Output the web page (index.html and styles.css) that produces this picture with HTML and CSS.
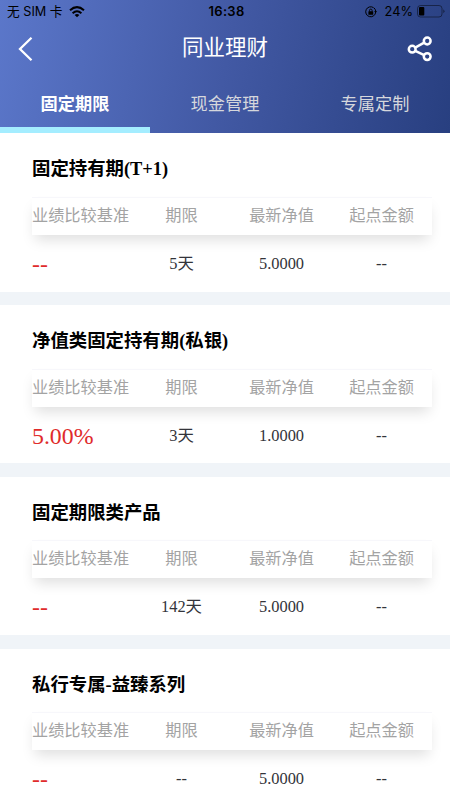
FILE: index.html
```html
<!DOCTYPE html>
<html lang="zh-CN">
<head>
<meta charset="utf-8">
<title>同业理财</title>
<link rel="stylesheet" href="styles.css">
</head>
<body>
<header class="header">
  <div class="status">
    <div class="status-left"><span>无 SIM 卡</span>
      <svg class="wifi" viewBox="0 0 16 12" width="16" height="12"><g fill="none" stroke="#000" stroke-width="2"><path d="M1 4.3Q8-2 15 4.3"/><path d="M3.6 7.2Q8 3.2 12.4 7.2"/></g><path d="M5.6 8.9Q8 7 10.4 8.9L8 11.3Z"/></svg>
    </div>
    <div class="clock">16:38</div>
    <div class="status-right">
      <svg class="lock" viewBox="0 0 12 12" width="12" height="12"><path d="M10.7 6A5 5 0 1 1 8.6 1.7" fill="none" stroke="#000"/><path d="M9 1.9A5 5 0 0 1 10.7 5" fill="none" stroke="#000"/><path d="M9.2 5h2.8l-1.4 2.1Z"/><rect x="3.4" y="5.2" width="4.8" height="3.5" rx=".5"/><path d="M4.5 5.5V4.4a1.3 1.3 0 0 1 2.6 0v1.1" fill="none" stroke="#000" stroke-width=".9"/></svg>
      <span class="percent">24%</span>
      <svg class="battery" viewBox="0 0 28 13" width="28" height="13"><rect x=".5" y=".5" width="24.5" height="11.5" rx="3" fill="none" stroke="#000" stroke-opacity=".45"/><path d="M26.3 4.2q2.4 2 0 4Z" opacity=".5"/><rect x="2" y="2" width="5.3" height="8.5" rx="1"/></svg>
    </div>
  </div>
  <div class="nav">
    <svg viewBox="0 0 26 26" width="26" height="26"><path d="M14.5 1.8 3 13l11.5 11.3" fill="none" stroke="#fff" stroke-width="2.3"/></svg>
    <h1>同业理财</h1>
    <svg viewBox="0 0 26 26" width="26" height="26"><g fill="none" stroke="#fff" stroke-width="2.5"><circle cx="5.2" cy="13.2" r="3.4"/><circle cx="20.2" cy="5" r="3.4"/><circle cx="20.2" cy="20.6" r="3.4"/><path d="m8.2 11.6 9-4.9M8.2 14.8l9 4.3"/></g></svg>
  </div>
  <nav class="tabs">
    <div class="tab active">固定期限</div>
    <div class="tab">现金管理</div>
    <div class="tab">专属定制</div>
  </nav>
</header>
<main class="list">
  <section class="card">
    <h2>固定持有期(T+1)</h2>
    <div class="row head"><span>业绩比较基准</span><span>期限</span><span>最新净值</span><span>起点金额</span></div>
    <div class="row data"><span class="rate">--</span><span>5天</span><span>5.0000</span><span>--</span></div>
  </section>
  <section class="card">
    <h2>净值类固定持有期(私银)</h2>
    <div class="row head"><span>业绩比较基准</span><span>期限</span><span>最新净值</span><span>起点金额</span></div>
    <div class="row data"><span class="rate">5.00%</span><span>3天</span><span>1.0000</span><span>--</span></div>
  </section>
  <section class="card">
    <h2>固定期限类产品</h2>
    <div class="row head"><span>业绩比较基准</span><span>期限</span><span>最新净值</span><span>起点金额</span></div>
    <div class="row data"><span class="rate">--</span><span>142天</span><span>5.0000</span><span>--</span></div>
  </section>
  <section class="card">
    <h2>私行专属-益臻系列</h2>
    <div class="row head"><span>业绩比较基准</span><span>期限</span><span>最新净值</span><span>起点金额</span></div>
    <div class="row data"><span class="rate">--</span><span>--</span><span>5.0000</span><span>--</span></div>
  </section>
</main>
</body>
</html>
```
FILE: styles.css
```css
* { box-sizing: border-box; }
html { height: 100%; overflow: hidden; }
body {
  margin: 0;
  height: 800px;
  overflow: hidden;
  background: #f0f4f8;
  font-family: "Liberation Serif", "Noto Sans CJK SC", serif;
}
h1, h2 { margin: 0; }
.header {
  height: 133.4px;
  background: linear-gradient(101deg, #5b77ca 0%, #4259a4 50%, #283f80 100%);
  font-family: Inter, "Noto Sans CJK SC", sans-serif;
}
.status {
  display: grid;
  grid-template-columns: 1fr auto 1fr;
  align-items: center;
  height: 23px;
  padding: 0 5px 0 7px;
  font-size: 12.7px;
  line-height: 23px;
}
.status-left, .status-right { display: flex; align-items: center; }
.status-left { gap: 6px; }
.status-right { justify-content: flex-end; }
.clock { padding-left: 1px; font-weight: 600; font-size: 13px; letter-spacing: .3px; }
.percent { margin: 0 4px 0 8px; font-size: 12.8px; }
.nav {
  display: flex;
  align-items: center;
  justify-content: space-between;
  height: 51px;
  padding: 0 17px 0 17px;
}
.nav h1 {
  color: #fff;
  font-size: 21.5px;
  font-weight: 400;
  line-height: 48px;
  height: 51px;
}
.tabs { display: flex; height: 59.4px; }
.tab {
  flex: 1;
  border-bottom: 6.5px solid transparent;
  color: #d5d7dc;
  font-size: 17.2px;
  line-height: 59px;
  text-align: center;
}
.tab.active { color: #fff; font-weight: 700; border-color: #a4edff; }
.card {
  height: 158.3px;
  margin-bottom: 13.5px;
  padding: 0 18px 0 32px;
  background: #fff;
}
.card h2 {
  height: 63.5px;
  font-size: 18.4px;
  font-weight: 700;
  line-height: 73px;
}
.row {
  display: grid;
  grid-template-columns: 99.5px repeat(3, 100px);
  text-align: center;
}
.row span:first-child { text-align: left; }
.head {
  height: 38px;
  border-top: 1px solid #f7f7fb;
  box-shadow: 0 8px 14px -3px rgba(0, 0, 0, .13);
  color: #a3a3a3;
  font-size: 16.2px;
  line-height: 36px;
  white-space: nowrap;
}
.data {
  height: 56.8px;
  color: #33343a;
  font-size: 16.4px;
  line-height: 57px;
}
.data .rate { color: #e02b2b; font-size: 23.8px; line-height: 58px; }
```
